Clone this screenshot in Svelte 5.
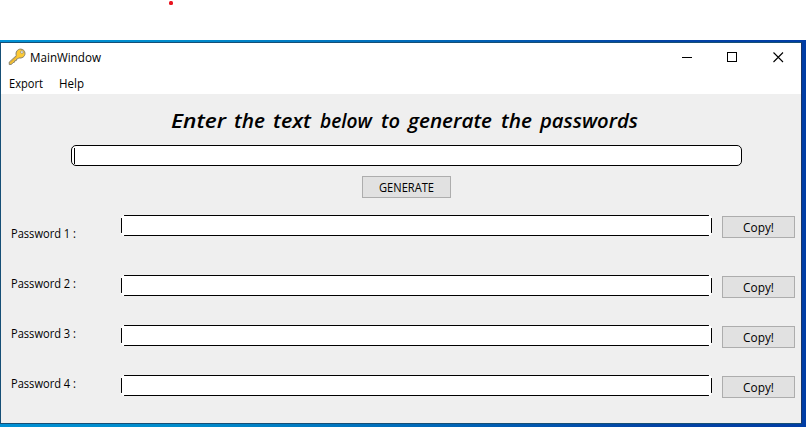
<script>
  const rows = ['Password 1 :', 'Password 2 :', 'Password 3 :', 'Password 4 :'];
  const heading = [
    ['Enter', 11, 55],
    ['the', 74, 31],
    ['text', 113, 38],
    ['below', 160, 52],
    ['to', 221, 19],
    ['generate', 248, 84],
    ['the', 341, 31],
    ['passwords', 380, 98]
  ];
</script>

{#snippet line(text, width)}
  <svg class="line" {width} height="16"><text x="0" y="12" textLength={width} lengthAdjust="spacingAndGlyphs">{text}</text></svg>
{/snippet}

<div class="page">
  <div class="paper"><i class="dot"></i></div>
  <div class="desktop">
    <div class="window">
      <header>
        <svg class="key" width="18" height="18" viewBox="0 0 18 18">
          <path d="M8.3 7.6 C7.2 4.2 9.4 1.1 12.6 1.1 C15.2 1.1 17 3 17 5.4 C17 8.7 13.9 10.6 10.7 9.9 L9.6 11 L8.6 11.1 L8.3 12.6 L6.8 12.7 L6.4 14.3 L5 14.5 L3.7 16.2 L1.3 16.6 L1.2 14.2 Z" fill="#fcc934" stroke="#85806f" stroke-width="1" stroke-linejoin="round" />
          <path d="M2.5 14.8 L8.8 8.6" stroke="#d69d2c" stroke-width=".8" />
          <circle cx="13.9" cy="4.1" r="1.3" fill="#fff" stroke="#85806f" stroke-width=".7" />
        </svg>
        <span class="title">{@render line('MainWindow', 71)}</span>
        <svg class="controls" width="104" height="12" shape-rendering="crispEdges">
          <path d="M1 5.5H11" stroke="#000" />
          <rect x="46.5" y=".5" width="9" height="9" fill="none" stroke="#000" />
          <path d="M92.5.5 L102 10 M102 .5 L92.5 10" stroke="#000" stroke-width="1.1" shape-rendering="geometricPrecision" />
        </svg>
      </header>
      <nav>{@render line('Export', 34)}{@render line('Help', 25)}</nav>
      <main>
        <h1>
          <svg width="480" height="36">
            {#each heading as [word, x, width]}
              <text {x} y="24" textLength={width} lengthAdjust="spacingAndGlyphs">{word}</text>
            {/each}
          </svg>
        </h1>
        <div class="entry"><i></i></div>
        <button class="generate">{@render line('GENERATE', 55)}</button>
        <section>
          {#each rows as label, i}
            <div class="row" class:first={i === 0}>
              <div class="label">{@render line(label, 65)}</div>
              <div class="field"></div>
              <button>{@render line('Copy!', 31)}</button>
            </div>
          {/each}
        </section>
      </main>
    </div>
  </div>
</div>

<style>
  .page {
    width: 806px;
    height: 427px;
    overflow: hidden;
    background: #fff;
    font-family: 'Open Sans', 'Noto Sans', sans-serif;
    font-size: 12px;
    color: #000;
  }
  .page, .page * { box-sizing: border-box; }
  svg { display: block; flex: none; overflow: visible; }
  .paper { height: 40px; padding: 1px 0 0 169px; }
  .dot { display: block; width: 4px; height: 4px; border-radius: 1.5px; background: #e9141f; }
  .desktop {
    height: 387px;
    padding-top: 2px;
    background: linear-gradient(90deg, #0090d4 0, #008ccc 180px, #0068b8 430px, #0344a5 650px, #003da5 806px);
  }
  .window {
    width: 802px;
    height: 382px;
    border: 1px solid #164f76;
    border-right-color: #173468;
    background: #efefef;
  }
  header {
    height: 30px;
    display: flex;
    background: #fff;
    padding: 5px 0 0 7px;
  }
  .title { margin: 2px 0 0 4px; }
  .controls { margin: 4px 0 0 580px; }
  nav {
    height: 21px;
    display: flex;
    gap: 16px;
    padding: 3px 0 0 8px;
    background: #fff;
  }
  main { display: flex; flex-direction: column; }
  h1 {
    height: 51px;
    margin: 0;
    padding: 10px 0 0 159px;
    font-size: 20px;
    font-style: italic;
    font-weight: 600;
  }
  .entry {
    width: 671px;
    height: 21px;
    margin-left: 70px;
    padding: 2px;
    border: 1px solid #000;
    border-radius: 5px;
    background: #fff;
  }
  .entry i { display: block; width: 1px; height: 16px; background: #000; }
  button {
    display: flex;
    width: 73px;
    height: 22px;
    margin: 0;
    padding: 3px 0 0;
    justify-content: center;
    align-items: flex-start;
    border: 1px solid #adadad;
    border-radius: 0;
    background: #e1e1e1;
    font: inherit;
    color: #000;
  }
  .generate { width: 89px; margin: 10px 0 0 361px; }
  section { margin-top: 17px; }
  .row {
    height: 50px;
    display: grid;
    grid-template-columns: 110px 591px 73px;
    padding-left: 10px;
    align-items: start;
  }
  .row.first { height: 60px; }
  .label { padding-top: 1px; }
  .first .label { padding-top: 11px; }
  .field {
    height: 21px;
    border-radius: 4px;
    background:
      linear-gradient(#000, #000) center top / calc(100% - 6px) 1px no-repeat,
      linear-gradient(#000, #000) center bottom / calc(100% - 6px) 1px no-repeat,
      linear-gradient(#000, #000) left center / 1px calc(100% - 6px) no-repeat,
      linear-gradient(#000, #000) right center / 1px calc(100% - 6px) no-repeat,
      #fff;
  }
  .row button { margin: 1px 0 0 10px; }
</style>
